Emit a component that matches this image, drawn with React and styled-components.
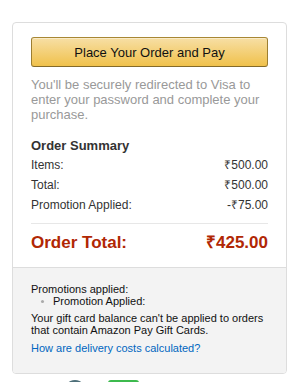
import styled, { createGlobalStyle } from "styled-components";

const GlobalStyle = createGlobalStyle`
  body {
    margin: 0;
    background: #fff;
    font-family: Arial, "Liberation Sans", sans-serif;
    color: #111;
  }
`;

const Page = styled.div`
  padding: 22px 0 0 12px;
`;

const Box = styled.div`
  width: 275px;
  box-sizing: border-box;
  border: 1px solid #ddd;
  border-radius: 4px;
  overflow: hidden;
`;

const Inner = styled.div`
  padding: 14px 18px 14px 18px;
`;

const PayButton = styled.button`
  display: block;
  width: 100%;
  height: 30px;
  box-sizing: border-box;
  border: 1px solid;
  border-color: #a88734 #9c7e31 #846a29;
  border-radius: 3px;
  background: linear-gradient(to bottom, #f7dfa5, #f0c14b);
  box-shadow: inset 0 1px 0 rgba(255, 255, 255, 0.4);
  font-family: inherit;
  font-size: 13px;
  color: #111;
  padding: 0;
  cursor: pointer;
`;

const Note = styled.p`
  margin: 10px 0 0;
  font-size: 13px;
  line-height: 15px;
  color: #999;
`;

const Heading = styled.h3`
  margin: 14px 0 0;
  font-size: 13px;
  line-height: 19px;
  font-weight: 700;
  color: #333;
`;

const Row = styled.div`
  display: flex;
  justify-content: space-between;
  font-size: 12px;
  line-height: 20px;
  color: #333;
`;

const Divider = styled.hr`
  margin: 8px 0 8px;
  border: 0;
  border-top: 1px solid #e7e7e7;
`;

const TotalRow = styled(Row)`
  font-size: 17px;
  line-height: 21px;
  font-weight: 700;
  color: #b12704;
`;

const Footer = styled.div`
  background: #f3f3f3;
  border-top: 1px solid #ddd;
  padding: 15px 18px 19px;
  font-size: 11px;
  line-height: 12px;
  color: #111;
`;

const PromoList = styled.ul`
  margin: 0;
  padding: 0 0 0 22px;
  list-style: none;

  li {
    position: relative;
  }

  li::before {
    content: "";
    position: absolute;
    left: -12px;
    top: 5px;
    width: 3px;
    height: 3px;
    border-radius: 50%;
    background: #aaa;
  }
`;

const FooterText = styled.p`
  margin: 5px 0 0;
`;

const Link = styled.a`
  display: block;
  margin-top: 6px;
  color: #0066c0;
  text-decoration: none;
`;

const Logos = styled.div`
  display: flex;
  align-items: flex-start;
  gap: 21px;
  margin: 5px 0 0 51px;
  height: 8px;
  overflow: hidden;
`;

const App = () => (
  <>
    <GlobalStyle />
    <Page>
      <Box>
        <Inner>
          <PayButton>Place Your Order and Pay</PayButton>
          <Note>
            You'll be securely redirected to Visa to enter your password and
            complete your purchase.
          </Note>
          <Heading>Order Summary</Heading>
          <Row>
            <span>Items:</span>
            <span>₹500.00</span>
          </Row>
          <Row>
            <span>Total:</span>
            <span>₹500.00</span>
          </Row>
          <Row>
            <span>Promotion Applied:</span>
            <span>-₹75.00</span>
          </Row>
          <Divider />
          <TotalRow>
            <span>Order Total:</span>
            <span>₹425.00</span>
          </TotalRow>
        </Inner>
        <Footer>
          <div>Promotions applied:</div>
          <PromoList>
            <li>Promotion Applied:</li>
          </PromoList>
          <FooterText>
            Your gift card balance can't be applied to orders that contain
            Amazon Pay Gift Cards.
          </FooterText>
          <Link href="#">How are delivery costs calculated?</Link>
        </Footer>
      </Box>
      <Logos>
        <svg width="24" height="8" viewBox="0 0 24 8">
          <ellipse cx="12" cy="14" rx="12" ry="13" fill="#4d6f79" />
        </svg>
        <svg width="31" height="8" viewBox="0 0 31 8">
          <rect x="0" y="1" width="31" height="20" rx="3" fill="#3dba4e" />
        </svg>
      </Logos>
    </Page>
  </>
);

export default App;
